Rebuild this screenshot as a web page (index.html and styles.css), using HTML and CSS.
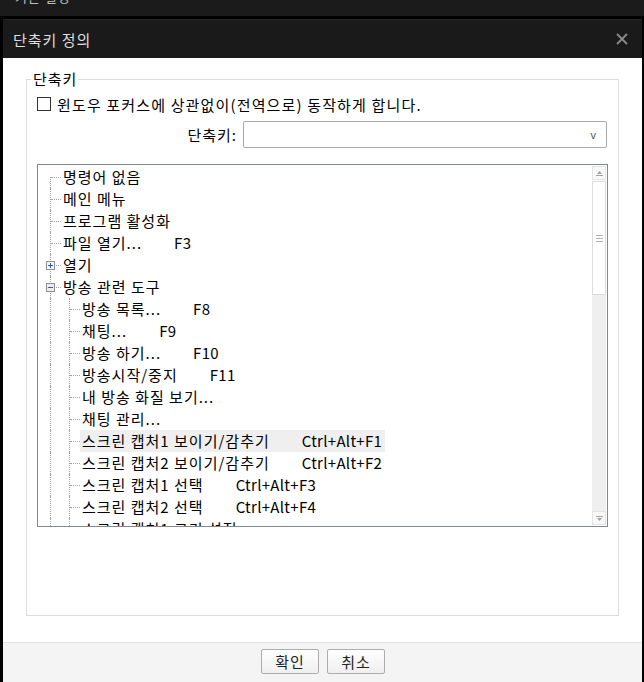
FILE: index.html
```html
<!DOCTYPE html>
<html>
<head>
  <meta charset="utf-8">
  <title>단축키 정의</title>
  <link rel="stylesheet" href="styles.css">
</head>
<body>
  <div class="parent-bar"><span>기본 설정</span></div>

  <div class="dialog">
    <div class="titlebar">
      <span class="title">단축키 정의</span>
      <svg class="close" width="12" height="12" viewBox="0 0 12 12">
        <path d="M1 1L11 11M11 1L1 11" />
      </svg>
    </div>

    <div class="dialog-body">
      <fieldset class="group">
        <legend>단축키</legend>
        <div class="group-inner">
          <div class="check-row">
            <span class="checkbox"></span>
            <span>윈도우 포커스에 상관없이(전역으로) 동작하게 합니다.</span>
          </div>

          <div class="key-row">
            <label>단축키:</label>
            <div class="combo"><span class="combo-arrow">v</span></div>
          </div>

          <div class="tree">
            <div class="tree-rows">
              <div class="node first"><span class="indent"></span><span class="branch"></span><span class="label">명령어 없음</span></div>
              <div class="node"><span class="indent"></span><span class="branch"></span><span class="label">메인 메뉴</span></div>
              <div class="node"><span class="indent"></span><span class="branch"></span><span class="label">프로그램 활성화</span></div>
              <div class="node"><span class="indent"></span><span class="branch"></span><span class="label">파일 열기...<span class="key">F3</span></span></div>
              <div class="node"><span class="indent"></span><span class="branch">
                <svg class="expander" width="9" height="9" viewBox="0 0 9 9"><rect x="0.5" y="0.5" width="8" height="8" /><path class="sign" d="M2 4.5H7M4.5 2V7" /></svg>
              </span><span class="label">열기</span></div>
              <div class="node"><span class="indent"></span><span class="branch">
                <svg class="expander open" width="9" height="9" viewBox="0 0 9 9"><rect x="0.5" y="0.5" width="8" height="8" /><path class="sign" d="M2 4.5H7" /></svg>
              </span><span class="label">방송 관련 도구</span></div>

              <div class="node"><span class="indent"></span><span class="guide"></span><span class="branch"></span><span class="label">방송 목록...<span class="key">F8</span></span></div>
              <div class="node"><span class="indent"></span><span class="guide"></span><span class="branch"></span><span class="label">채팅...<span class="key">F9</span></span></div>
              <div class="node"><span class="indent"></span><span class="guide"></span><span class="branch"></span><span class="label">방송 하기...<span class="key">F10</span></span></div>
              <div class="node"><span class="indent"></span><span class="guide"></span><span class="branch"></span><span class="label">방송시작/중지<span class="key">F11</span></span></div>
              <div class="node"><span class="indent"></span><span class="guide"></span><span class="branch"></span><span class="label">내 방송 화질 보기...</span></div>
              <div class="node"><span class="indent"></span><span class="guide"></span><span class="branch"></span><span class="label">채팅 관리...</span></div>
              <div class="node selected"><span class="indent"></span><span class="guide"></span><span class="branch"></span><span class="label">스크린 캡처1 보이기/감추기<span class="key">Ctrl+Alt+F1</span></span></div>
              <div class="node"><span class="indent"></span><span class="guide"></span><span class="branch"></span><span class="label">스크린 캡처2 보이기/감추기<span class="key">Ctrl+Alt+F2</span></span></div>
              <div class="node"><span class="indent"></span><span class="guide"></span><span class="branch"></span><span class="label">스크린 캡처1 선택<span class="key">Ctrl+Alt+F3</span></span></div>
              <div class="node"><span class="indent"></span><span class="guide"></span><span class="branch"></span><span class="label">스크린 캡처2 선택<span class="key">Ctrl+Alt+F4</span></span></div>
              <div class="node"><span class="indent"></span><span class="guide"></span><span class="branch"></span><span class="label">스크린 캡처1 크기 설정</span></div>
            </div>

            <div class="scrollbar">
              <div class="sb-btn">
                <svg width="7" height="5" viewBox="0 0 7 5"><path d="M3.5 0L6 3H1Z" /><rect x="0" y="4" width="7" height="1" /></svg>
              </div>
              <div class="sb-thumb"><span class="grip"></span></div>
              <div class="sb-track"></div>
              <div class="sb-btn">
                <svg width="7" height="5" viewBox="0 0 7 5"><rect x="0" y="0" width="7" height="1" /><path d="M1 2H6L3.5 5Z" /></svg>
              </div>
            </div>
          </div>
        </div>
      </fieldset>
    </div>

    <div class="footer">
      <button>확인</button>
      <button>취소</button>
    </div>
  </div>
</body>
</html>
```

FILE: styles.css
```css
:root {
  --line: #a0a0a0;
  --border: #dcdcdc;
  --text: #000;
}

body {
  margin: 0;
  width: 644px;
  height: 682px;
  overflow: hidden;
  background: #000;
  font-family: "Noto Sans CJK KR", "Noto Sans", sans-serif;
  letter-spacing: 1px;
  color: var(--text);
}

/* Parent window, cut off at the top */
.parent-bar {
  height: 16px;
  overflow: hidden;
  padding-left: 15px;
  background: #1b1b1b;
  color: #bdbdbd;
  font-size: 13px;
  line-height: 16px;
}

.parent-bar span {
  display: block;
  margin-top: -11px;
}

.dialog {
  margin: 3px 2px 0 3px;
  width: 639px;
  background: #fff;
}

.titlebar {
  height: 38px;
  border-top: 1px solid #262626;
  background: #1a1a1a;
  display: flex;
  align-items: center;
  justify-content: space-between;
  padding: 0 14px 0 10px;
}

.title {
  color: #dedede;
  font-size: 15px;
}

.close path {
  stroke: #8a8a8a;
  stroke-width: 1.8;
}

.dialog-body {
  height: 584px;
  padding: 12px 23px 0;
  box-sizing: border-box;
}

/* Group box */
.group {
  margin: 0;
  padding: 0;
  min-width: 0;
  height: 546px;
  box-sizing: border-box;
  border: 1px solid var(--border);
}

.group legend {
  margin-left: 4px;
  padding: 0 1px 0 2px;
  font-size: 15px;
  line-height: 18px;
}

.group-inner {
  padding: 5px 10px 0;
}

.check-row {
  display: flex;
  align-items: center;
  gap: 6px;
  height: 22px;
  font-size: 15px;
  letter-spacing: 1.15px;
}

.checkbox {
  width: 14px;
  height: 14px;
  box-sizing: border-box;
  border: 1px solid #333;
  background: #fff;
  flex: none;
}

.key-row {
  display: flex;
  align-items: center;
  justify-content: flex-end;
  gap: 6px;
  margin-top: 6px;
  font-size: 15px;
}

.combo {
  width: 364px;
  height: 27px;
  margin-right: 1px;
  box-sizing: border-box;
  border: 1px solid #a9a9a9;
  border-radius: 2px;
  background: #fff;
  display: flex;
  align-items: center;
  justify-content: flex-end;
  padding-right: 10px;
}

.combo-arrow {
  font-family: "Liberation Sans", sans-serif;
  font-size: 11px;
  letter-spacing: 0;
  color: #555;
}

/* Tree view */
.tree {
  margin-top: 16px;
  height: 363px;
  box-sizing: border-box;
  border: 1px solid #828790;
  background: #fff;
  display: flex;
}

.tree-rows {
  flex: 1;
  padding-top: 1px;
  overflow: hidden;
}

.node {
  display: flex;
  height: 22px;
  line-height: 22px;
  font-size: 15px;
  white-space: nowrap;
}

.indent {
  width: 12px;
  flex: none;
}

.guide {
  width: 19px;
  flex: none;
  box-sizing: border-box;
  border-left: 1px dotted var(--line);
}

.branch {
  position: relative;
  width: 11px;
  flex: none;
}

.branch::before {
  content: "";
  position: absolute;
  left: 0;
  top: 0;
  bottom: 0;
  border-left: 1px dotted var(--line);
}

.node.first .branch::before {
  top: 11px;
}

.branch::after {
  content: "";
  position: absolute;
  left: 1px;
  top: 11px;
  width: 10px;
  border-top: 1px dotted var(--line);
}

.expander {
  position: absolute;
  left: -4px;
  top: 7px;
  z-index: 1;
}

.expander rect {
  fill: #f6f6f6;
  stroke: #8f8f8f;
}

.expander .sign {
  stroke: #2a5fa8;
}

.expander.open rect {
  fill: #ececec;
}

.expander.open .sign {
  stroke: #3f5f8c;
}

.label {
  padding: 0 1px 0 2px;
}

.key {
  margin-left: 32px;
  letter-spacing: 0.3px;
}

.node.selected .label {
  background: #efefef;
  padding-right: 3px;
}

/* Scrollbar */
.scrollbar {
  width: 15px;
  flex: none;
  box-sizing: border-box;
  padding: 1px 1px 1px 0;
  display: flex;
  flex-direction: column;
}

.sb-btn {
  height: 14px;
  box-sizing: border-box;
  border: 1px solid #e4e4e4;
  background: #f8f8f8;
  display: flex;
  align-items: center;
  justify-content: center;
}

.sb-btn svg {
  fill: #a2a2a2;
}

.sb-thumb {
  height: 114px;
  margin-top: 1px;
  box-sizing: border-box;
  border: 1px solid #dcdcdc;
  background: #fff;
  display: flex;
  align-items: center;
  justify-content: center;
}

.grip {
  width: 7px;
  height: 5px;
  border-top: 1px solid #b5b5b5;
  border-bottom: 1px solid #b5b5b5;
  position: relative;
}

.grip::after {
  content: "";
  position: absolute;
  left: 0;
  right: 0;
  top: 2px;
  border-top: 1px solid #b5b5b5;
}

.sb-track {
  flex: 1;
  background: #efefef;
}

/* Footer */
.footer {
  height: 40px;
  box-sizing: border-box;
  border-top: 1px solid #e2e2e2;
  background: #f4f4f4;
  display: flex;
  justify-content: center;
  gap: 8px;
  padding-top: 6px;
}

button {
  width: 58px;
  height: 25px;
  padding: 0 0 0 1px;
  border: 1px solid #adadad;
  border-radius: 2px;
  background: linear-gradient(#ffffff, #efefef);
  font-family: "Noto Sans CJK KR", sans-serif;
  font-size: 15px;
  letter-spacing: 1px;
  line-height: 23px;
  color: #222;
}
```
